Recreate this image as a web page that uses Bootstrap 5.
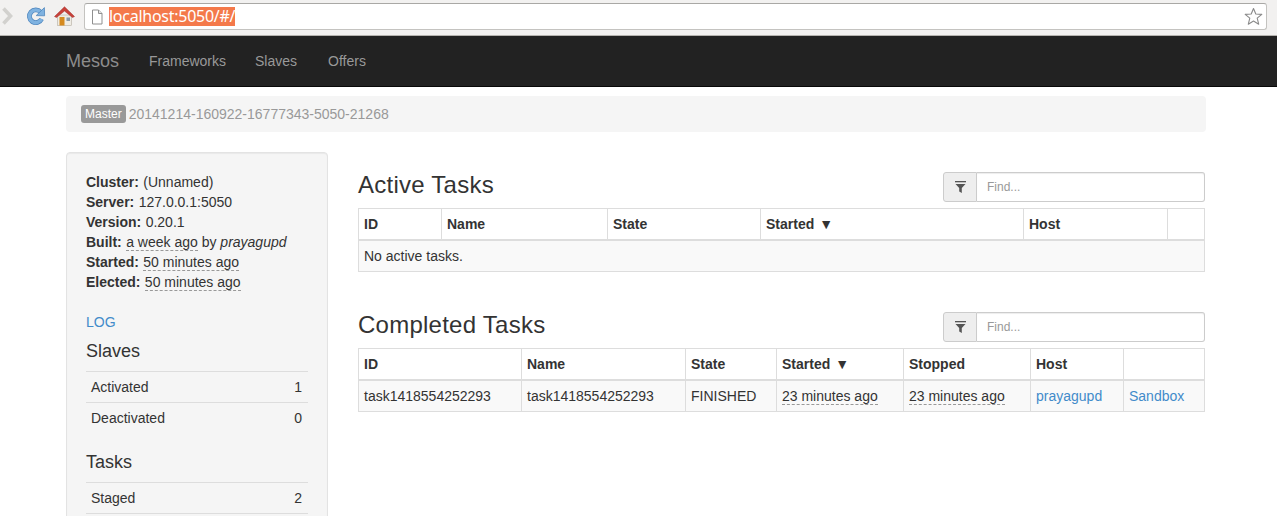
<!DOCTYPE html>
<html lang="en">
<head>
    <meta charset="UTF-8">
    <title>Mesos</title>
    <meta name="viewport" content="width=device-width, initial-scale=1.0">
    <link href="https://cdn.jsdelivr.net/npm/bootstrap@5.3.0/dist/css/bootstrap.min.css" rel="stylesheet">
    <style>
        html, body { height: 516px; overflow: hidden; }
        body { font-family: "Liberation Sans", Arial, sans-serif; font-size: 14px; line-height: 20px; color: #333; background: #fff; }
        a { color: #428bca; text-decoration: none; }

        /* browser chrome */
        .chrome-bar { height: 36px; background: #f2f1f0; border-bottom: 1px solid #b5b3af; padding: 3px 10px 0 0; }
        .chrome-btn { width: 29px; height: 26px; flex: none; }
        .chrome-back { width: 21px; padding-left: 1px; }
        .url-box { height: 27px; background: #fff; border: 1px solid #c4c3c0; border-top-color: #a9a8a5; border-radius: 3px; padding: 0 3px 0 5px; margin-left: 5px; }
        .url-text { font-family: "Noto Sans", sans-serif; font-size: 16px; line-height: 19px; background: #f4794a; color: #fff; margin-left: 5px; letter-spacing: -0.26px; }

        /* navbar */
        .mesos-nav { height: 51px; background: #222; border-bottom: 1px solid #080808; padding: 0 0 0 66px; }
        .mesos-brand { font-size: 18px; color: #8c8c8c; margin-right: 15px; }
        .mesos-link { color: #999; padding: 0 15px; }
        .mesos-link + .mesos-link { margin-left: -1px; }
        .mesos-link:last-child { margin-left: 1px; }

        .page-wrap { width: 1140px; margin-left: 66px; }
        .crumb-bar { height: 36px; margin-top: 9px; background: #f5f5f5; border-radius: 4px; padding: 0 15px; color: #999; }
        .master-tag { font-size: 12px; line-height: 18px; padding: 0 4px; margin-right: 3px; background: #999; color: #fff; border-radius: 3px; }

        .side-col { width: 262px; flex: none; }
        .side-well { min-height: 400px; margin-top: 20px; background: #f5f5f5; border: 1px solid #e3e3e3; border-radius: 4px; padding: 19px; box-shadow: inset 0 1px 1px rgba(0,0,0,.05); }
        .side-well p { margin: 0; }
        .side-well p strong { margin-right: .5px; }
        .side-log { margin-top: 20px !important; }
        .side-head { font-size: 18px; font-weight: 400; line-height: 20px; margin: 9px 0 10px; }
        .side-head.second { margin-top: 19px; }
        .time-ago { border-bottom: 1px dashed #999; }

        .stat-list { margin: 0; padding: 0; list-style: none; }
        .stat-list li { height: 31px; border-top: 1px solid #ddd; padding: 5px 6px 5px 5px; display: flex; justify-content: space-between; }

        .main-col { width: 847px; flex: none; margin-left: 30px; padding-top: 40px; }
        .task-block { height: 140px; }
        .task-head { height: 36px; }
        .task-head h3 { font-size: 24px; font-weight: 400; line-height: 26px; margin: 0; letter-spacing: .25px; }
        .find-box { width: 262px; height: 30px; }
        .find-icon { width: 34px; background: #eee; border: 1px solid #ccc; border-radius: 3px 0 0 3px; }
        .find-input { flex: 1; min-width: 0; border: 1px solid #ccc; border-left: 0; border-radius: 0 3px 3px 0; font-size: 12px; padding: 0 10px; box-shadow: inset 0 1px 1px rgba(0,0,0,.075); outline: 0; color: #555; }
        .find-input::placeholder { color: #999; opacity: 1; }

        .task-table { width: 846px; table-layout: fixed; border-collapse: collapse; margin: 0; }
        .task-table th, .task-table td { border: 1px solid #ddd; padding: 5px; height: 31px; line-height: 20px; font-size: 14px; white-space: nowrap; }
        .task-table thead th { border-bottom: 2px solid #ddd; height: 31px; font-weight: 700; }
        .task-table tbody td { background: #f9f9f9; }
        .sort-mark { font-size: 14px; line-height: 1; margin-left: 1px; }

        .w-a1 { width: 83px; } .w-a2 { width: 166px; } .w-a3 { width: 153px; }
        .w-a4 { width: 263px; } .w-a5 { width: 144px; } .w-a6 { width: 37px; }
        .w-c1 { width: 163px; } .w-c2 { width: 164px; } .w-c3 { width: 91px; }
        .w-c4 { width: 127px; } .w-c5 { width: 127px; } .w-c6 { width: 93px; } .w-c7 { width: 81px; }
    </style>
</head>
<body>

    <div class="chrome-bar d-flex align-items-start">
        <div class="chrome-btn chrome-back d-flex align-items-center">
            <svg width="13" height="18" viewBox="0 0 13 18"><path d="M2.5 1.5 L9.5 9 L2.5 16.5" fill="none" stroke="#d2d1ce" stroke-width="3.6"/></svg>
        </div>
        <div class="chrome-btn d-flex align-items-center justify-content-center">
            <svg width="20" height="20" viewBox="0 0 20 20"><path d="M14.6 6 A6.4 6.4 0 1 0 15.6 13" fill="none" stroke="#4f86bd" stroke-width="4.8"/><path d="M14.6 6 A6.4 6.4 0 1 0 15.6 13" fill="none" stroke="#7fb2e0" stroke-width="3.4"/><path d="M10.2 9.6 L18.6 9.8 L18.4 1.6 Z" fill="#7fb2e0" stroke="#4f86bd" stroke-width=".8"/></svg>
        </div>
        <div class="chrome-btn d-flex align-items-center justify-content-center">
            <svg width="21" height="20" viewBox="0 0 21 20"><rect x="3.5" y="9" width="14" height="10.5" fill="#efece4" stroke="#b5aea0" stroke-width=".6"/><path d="M0.5 10.5 L10.5 0.8 L20.5 10.5 L18.5 11.5 L10.5 5 L2.5 11.5 Z" fill="#c9413a" stroke="#9c2f2a" stroke-width=".5"/><rect x="5.5" y="11" width="5" height="8.5" fill="#d58a1f"/><rect x="12.5" y="11.5" width="3.5" height="3.5" fill="#8a9aa8"/></svg>
        </div>
        <div class="url-box flex-grow-1 d-flex align-items-center">
            <svg width="14" height="16" viewBox="0 0 14 16"><path d="M2.5 1 H8.5 L12 4.5 V15 H2.5 Z" fill="#fff" stroke="#8f8f8f"/><path d="M8.5 1 V4.5 H12" fill="#e4e4e4" stroke="#8f8f8f"/></svg>
            <span class="url-text">localhost:5050/#/</span>
            <svg class="ms-auto" width="19" height="19" viewBox="0 0 19 19"><path d="M9.5 1.5 L11.8 7 L17.8 7.4 L13.2 11.2 L14.7 17.2 L9.5 14 L4.3 17.2 L5.8 11.2 L1.2 7.4 L7.2 7 Z" fill="#fff" stroke="#8a8a8a" stroke-width="1.1" stroke-linejoin="round"/></svg>
        </div>
    </div>

    <nav class="mesos-nav d-flex align-items-center">
        <a class="mesos-brand" href="#">Mesos</a>
        <a class="mesos-link" href="#">Frameworks</a>
        <a class="mesos-link" href="#">Slaves</a>
        <a class="mesos-link" href="#">Offers</a>
    </nav>

    <div class="page-wrap">
        <div class="crumb-bar d-flex align-items-center">
            <span class="master-tag">Master</span>
            <span>20141214-160922-16777343-5050-21268</span>
        </div>

        <div class="d-flex align-items-start">
            <div class="side-col">
                <div class="side-well">
                    <p><strong>Cluster:</strong> (Unnamed)</p>
                    <p><strong>Server:</strong> 127.0.0.1:5050</p>
                    <p><strong>Version:</strong> 0.20.1</p>
                    <p><strong>Built:</strong> <span class="time-ago">a week ago</span> by <em>prayagupd</em></p>
                    <p><strong>Started:</strong> <span class="time-ago">50 minutes ago</span></p>
                    <p><strong>Elected:</strong> <span class="time-ago">50 minutes ago</span></p>
                    <p class="side-log"><a href="#">LOG</a></p>

                    <h4 class="side-head">Slaves</h4>
                    <ul class="stat-list">
                        <li><span>Activated</span><span>1</span></li>
                        <li><span>Deactivated</span><span>0</span></li>
                    </ul>

                    <h4 class="side-head second">Tasks</h4>
                    <ul class="stat-list">
                        <li><span>Staged</span><span>2</span></li>
                        <li></li>
                    </ul>
                </div>
            </div>

            <div class="main-col">
                <div class="task-block">
                    <div class="task-head d-flex justify-content-between align-items-start">
                        <h3>Active Tasks</h3>
                        <div class="find-box d-flex">
                            <span class="find-icon d-flex align-items-center justify-content-center">
                                <svg width="11" height="12" viewBox="0 0 11 12"><rect x="0" y="0" width="11" height="1.3" fill="#555"/><path d="M0.5 3 H10.5 L6.8 7 V12 L4.2 10.4 V7 Z" fill="#555"/></svg>
                            </span>
                            <input class="find-input" type="text" placeholder="Find...">
                        </div>
                    </div>
                    <table class="task-table">
                        <colgroup>
                            <col class="w-a1"><col class="w-a2"><col class="w-a3"><col class="w-a4"><col class="w-a5"><col class="w-a6">
                        </colgroup>
                        <thead>
                            <tr><th>ID</th><th>Name</th><th>State</th><th>Started <span class="sort-mark">▼</span></th><th>Host</th><th></th></tr>
                        </thead>
                        <tbody>
                            <tr><td colspan="6">No active tasks.</td></tr>
                        </tbody>
                    </table>
                </div>

                <div class="task-block">
                    <div class="task-head d-flex justify-content-between align-items-start">
                        <h3>Completed Tasks</h3>
                        <div class="find-box d-flex">
                            <span class="find-icon d-flex align-items-center justify-content-center">
                                <svg width="11" height="12" viewBox="0 0 11 12"><rect x="0" y="0" width="11" height="1.3" fill="#555"/><path d="M0.5 3 H10.5 L6.8 7 V12 L4.2 10.4 V7 Z" fill="#555"/></svg>
                            </span>
                            <input class="find-input" type="text" placeholder="Find...">
                        </div>
                    </div>
                    <table class="task-table">
                        <colgroup>
                            <col class="w-c1"><col class="w-c2"><col class="w-c3"><col class="w-c4"><col class="w-c5"><col class="w-c6"><col class="w-c7">
                        </colgroup>
                        <thead>
                            <tr><th>ID</th><th>Name</th><th>State</th><th>Started <span class="sort-mark">▼</span></th><th>Stopped</th><th>Host</th><th></th></tr>
                        </thead>
                        <tbody>
                            <tr>
                                <td>task1418554252293</td>
                                <td>task1418554252293</td>
                                <td>FINISHED</td>
                                <td><span class="time-ago">23 minutes ago</span></td>
                                <td><span class="time-ago">23 minutes ago</span></td>
                                <td><a href="#">prayagupd</a></td>
                                <td><a href="#">Sandbox</a></td>
                            </tr>
                        </tbody>
                    </table>
                </div>
            </div>
        </div>
    </div>

    <script src="https://cdn.jsdelivr.net/npm/bootstrap@5.3.0/dist/js/bootstrap.bundle.min.js"></script>
</body>
</html>
